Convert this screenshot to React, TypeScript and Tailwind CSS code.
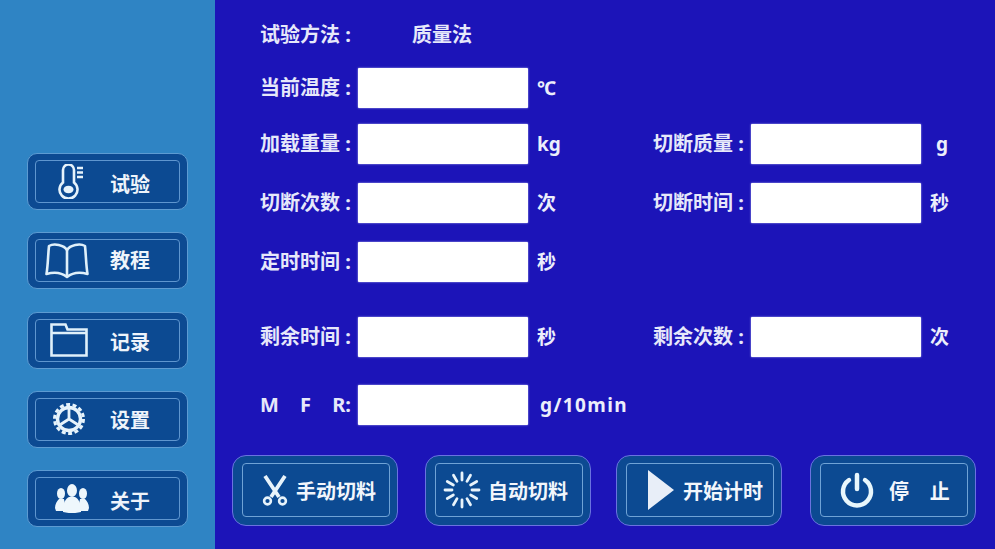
import React from 'react';

const Thermo = () => (
  <svg width="26" height="35" viewBox="0 0 26 35" fill="none" stroke="#e6f3fb" strokeWidth="2.6">
    <path d="M5 18.5V6a5.5 5.5 0 0 1 11 0v12.5a9 9 0 1 1-11 0z" />
    <ellipse cx="10.5" cy="25.5" rx="5" ry="3.8" fill="#e6f3fb" stroke="none" />
    <path d="M19 4h6M19 8.5h6M19 13h6" strokeWidth="2.4" />
  </svg>
);

const Book = () => (
  <svg width="44" height="36" viewBox="0 0 44 36" fill="none" stroke="#dff0fa" strokeWidth="2.6" strokeLinejoin="round">
    <path d="M22 7C19 2 9 0 4 3 3 12 3 22 1.500 31c7-2 15-1.500 20.500 3 5.500-4.500 13.500-5 20.500-3C41 22 41 12 40 3c-5-3-15-1-18 4z" />
    <path d="M22 7v27" />
  </svg>
);

const Folder = () => (
  <svg width="38" height="34" viewBox="0 0 38 34" fill="none" stroke="#dff0fa" strokeWidth="2.6">
    <path d="M1.500 32.500V1.500h14l2 5h19v26z" />
    <path d="M1.500 10h35" />
  </svg>
);

const Gear = () => (
  <svg width="32" height="34" viewBox="0 0 32 34" fill="none" stroke="#e6f3fb">
    <circle cx="16" cy="17" r="14.500" strokeWidth="3" strokeDasharray="4 2.500" />
    <circle cx="16" cy="17" r="11.500" strokeWidth="3.400" />
    <path d="M16 17V7M16 17l-8.500 5.500M16 17l8.500 5.500" strokeWidth="2.800" />
  </svg>
);

const People = () => (
  <svg width="34" height="29" viewBox="0 0 34 29" fill="#eef7fc">
    <ellipse cx="6" cy="9.500" rx="4" ry="5.500" />
    <ellipse cx="28" cy="9.500" rx="4" ry="5.500" />
    <path d="M0 24c0-4 2-7 4-9h5l2 10-2 2H1zM34 24c0-4-2-7-4-9h-5l-2 10 2 2h8z" />
    <ellipse cx="17" cy="6.500" rx="5" ry="6.500" />
    <path d="M8 28c0-8 2-13 6-15h6c4 2 6 7 6 15-5 1.500-13 1.500-18 0z" />
  </svg>
);

const Scissors = () => (
  <svg width="26" height="31" viewBox="0 0 26 31" fill="none" stroke="#e8f3fb" strokeWidth="2.600">
    <path d="M3 1l14 21M23 1L9 22" strokeWidth="3.800" />
    <circle cx="5.500" cy="26" r="3.400" />
    <circle cx="20.500" cy="26" r="3.400" />
  </svg>
);

const Spinner = () => {
  const angles = [0, 30, 60, 90, 120, 150, 180, 210, 240, 270, 300, 330];
  return (
    <svg width="38" height="38" viewBox="0 0 38 38" stroke="#e8f3fb" strokeWidth="2.800" strokeLinecap="round">
      {angles.map(a => (
        <line key={a} x1="19" y1="2" x2="19" y2="9" transform={`rotate(${a} 19 19)`} />
      ))}
    </svg>
  );
};

const Play = () => (
  <svg width="26" height="40" viewBox="0 0 26 40">
    <path d="M0 0l26 20L0 40z" fill="#e8eef8" />
  </svg>
);

const Power = () => (
  <svg width="36" height="36" viewBox="0 0 36 36" fill="none" stroke="#e8f6fc" strokeWidth="4.500" strokeLinecap="round">
    <path d="M18 3v14" />
    <path d="M10 8a14 14 0 1 0 16 0" />
  </svg>
);

function SideButton({ icon, label, iconPad, labelClass }: { icon: React.ReactNode; label: string; iconPad: string; labelClass: string }) {
  return (
    <div className="h-[57px] w-[161px] rounded-[10px] border border-[#5d9bd2] bg-[#0c4a92] p-[6px_7px]">
      <div className="flex h-full items-center rounded-[4px] border border-[#5f96cf]">
        <div className={`w-[74px] ${iconPad}`}>{icon}</div>
        <span className={`text-[20px] font-bold leading-none text-[#eef4fb] ${labelClass}`}>{label}</span>
      </div>
    </div>
  );
}

function ActionButton({ icon, label, className }: { icon: React.ReactNode; label: string; className: string }) {
  return (
    <div className="h-[71px] w-[166px] rounded-[14px] border border-[#6a72e0] bg-[#0c4a92] p-[7px_7px_8px_9px]">
      <div className={`flex h-full items-center rounded-[4px] border border-[#6fa3d6] ${className}`}>
        {icon}
        <span className="mt-[3px] whitespace-pre text-[20px] font-bold leading-none text-[#f2f6fc]">{label}</span>
      </div>
    </div>
  );
}

function Field() {
  return <div className="h-[40px] w-[170px] rounded-[1px] bg-white shadow-[0_0_2px_#c9cdf5]" />;
}

function Label({ children }: { children: React.ReactNode }) {
  return <div className="w-[98px] shrink-0 whitespace-pre text-[20px] font-bold text-[#e6e8fa]">{children}</div>;
}

function Unit({ children, className }: { children?: React.ReactNode; className: string }) {
  return <div className={`shrink-0 pl-[9px] text-[19px] font-bold text-[#eceefb] ${className}`}>{children}</div>;
}

function Row({ className, left, leftUnit, right, rightUnit }: {
  className: string;
  left: React.ReactNode;
  leftUnit: React.ReactNode;
  right?: string;
  rightUnit?: React.ReactNode;
}) {
  return (
    <div className={`flex h-[40px] items-center pl-[45px] ${className}`}>
      <Label>{left}</Label>
      <Field />
      <Unit className="w-[125px]">{leftUnit}</Unit>
      {right && (
        <>
          <Label>{right}</Label>
          <Field />
          <Unit className="w-[40px]">{rightUnit}</Unit>
        </>
      )}
    </div>
  );
}

export default function App() {
  return (
    <div className="flex h-[549px] w-[995px] overflow-hidden bg-[#1c14b8] font-['Noto_Sans','Noto_Sans_CJK_SC',sans-serif]">
      <div className="flex w-[215px] shrink-0 flex-col justify-end gap-[22.25px] bg-[#2f84c4] pb-[22px] pl-[27px]">
        <SideButton icon={<Thermo />} label="试验" iconPad="pl-[22px]" labelClass="mt-[6px]" />
        <SideButton icon={<Book />} label="教程" iconPad="pl-[9px]" labelClass="mt-[0px]" />
        <SideButton icon={<Folder />} label="记录" iconPad="pl-[14px]" labelClass="mt-[5px]" />
        <SideButton icon={<Gear />} label="设置" iconPad="pl-[17px]" labelClass="mt-[3px]" />
        <SideButton icon={<People />} label="关于" iconPad="pl-[19px]" labelClass="mt-[6px]" />
      </div>

      <div className="flex flex-1 flex-col pt-[15px]">
        <div className="flex h-[40px] items-center pl-[45px] text-[20px] font-bold text-[#e6e8fa]">
          <div className="w-[152px] whitespace-pre">试验方法 :</div>
          <div>质量法</div>
        </div>
        <Row className="mt-[13px]" left="当前温度 :" leftUnit="℃" />
        <Row className="mt-[16px]" left="加载重量 :" leftUnit="kg" right="切断质量 :" rightUnit={<span className="pl-[6px]">g</span>} />
        <Row className="mt-[19px]" left="切断次数 :" leftUnit="次" right="切断时间 :" rightUnit="秒" />
        <Row className="mt-[19px]" left="定时时间 :" leftUnit="秒" />
        <Row className="mt-[35px]" left="剩余时间 :" leftUnit="秒" right="剩余次数 :" rightUnit="次" />
        <Row
          className="mt-[28px]"
          left={
            <div className="flex w-[91px] justify-between">
              <span>M</span>
              <span>F</span>
              <span>R:</span>
            </div>
          }
          leftUnit={<span className="pl-[3px] tracking-[1.4px]">g/10min</span>}
        />

        <div className="mt-[30px] flex pl-[17px]">
          <ActionButton className="gap-[8px] pl-[19px]" icon={<Scissors />} label="手动切料" />
          <div className="ml-[27px]">
            <ActionButton className="gap-[7px] pl-[7px]" icon={<Spinner />} label="自动切料" />
          </div>
          <div className="ml-[25px]">
            <ActionButton className="gap-[9px] pl-[21px]" icon={<Play />} label="开始计时" />
          </div>
          <div className="ml-[28px]">
            <ActionButton className="gap-[14px] pl-[18px]" icon={<Power />} label="停    止" />
          </div>
        </div>
      </div>
    </div>
  );
}
